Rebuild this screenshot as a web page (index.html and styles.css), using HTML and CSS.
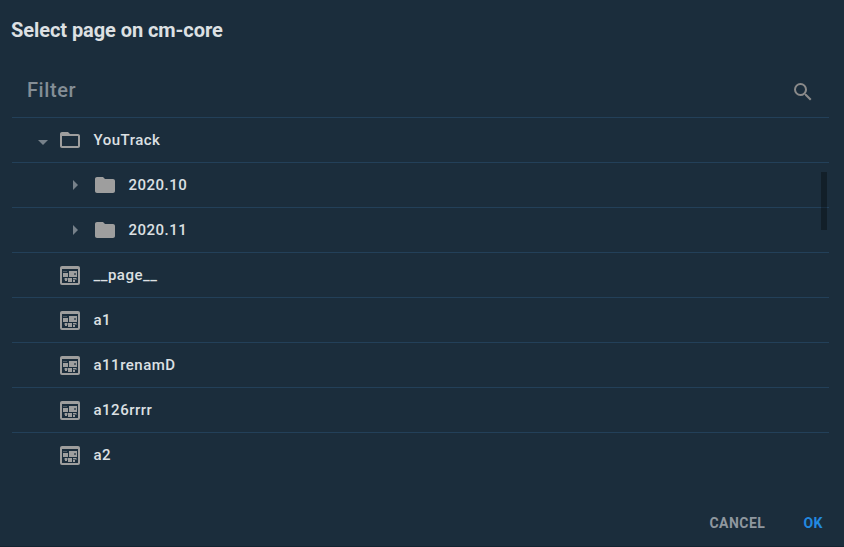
FILE: index.html
```
<!DOCTYPE html>
<html lang="en">
<head>
<meta charset="utf-8">
<title>Select page</title>
<link rel="stylesheet" href="styles.css">
</head>
<body>
<svg class="defs" aria-hidden="true">
  <symbol id="folder" viewBox="0 0 24 24"><path d="M10 4H4c-1.1 0-2 .9-2 2v12c0 1.1.9 2 2 2h16c1.1 0 2-.9 2-2V8c0-1.1-.9-2-2-2h-8l-2-2z"/></symbol>
  <symbol id="folder-open" viewBox="0 0 24 24"><path d="M20 18H4V8h16m0-2h-8l-2-2H4c-1.1 0-2 .9-2 2v12c0 1.1.9 2 2 2h16c1.1 0 2-.9 2-2V8c0-1.1-.9-2-2-2z"/></symbol>
  <symbol id="page" viewBox="0 0 24 24"><path fill-rule="evenodd" d="M4 3h16a2 2 0 0 1 2 2v15a2 2 0 0 1-2 2H4a2 2 0 0 1-2-2V5a2 2 0 0 1 2-2zM4 6v14h16V6z"/><path opacity=".4" d="M5 8h4v1H5zM16 9.500h2v3h-2zM15 15h4v2h-4zM6 15h1v2H6zM9 15h1v2H9z"/><path fill-rule="evenodd" d="M5 10h5v4H5zM11 8h8v6h-8zm5 2v2h2v-2zM7 15h2v3H7zM10 15h4v4h-4zM15 15h3v1h-3zM15 17h2v2h-2z"/></symbol>
</svg>
<main class="dialog">
  <h1 class="title">Select page on cm-core</h1>
  <div class="filter">
    <span>Filter</span>
    <svg class="icon" viewBox="0 0 24 24"><path d="M9.500 3A6.500 6.500 0 0 1 16 9.500c0 1.610-.590 3.090-1.560 4.230l.270.270h.790l5 5-1.500 1.500-5-5v-.790l-.270-.270A6.516 6.516 0 0 1 9.500 16a6.500 6.500 0 0 1 0-13m0 2C7 5 5 7 5 9.500S7 14 9.500 14 14 12 14 9.500 12 5 9.500 5z"/></svg>
  </div>
  <div class="tree">
    <div class="row"><i class="caret open"></i><svg class="icon"><use href="#folder-open"/></svg><span>YouTrack</span></div>
    <div class="row child"><i class="caret"></i><svg class="icon"><use href="#folder"/></svg><span>2020.10</span></div>
    <div class="row child"><i class="caret"></i><svg class="icon"><use href="#folder"/></svg><span>2020.11</span></div>
    <div class="row leaf"><svg class="icon"><use href="#page"/></svg><span>__page__</span></div>
    <div class="row leaf"><svg class="icon"><use href="#page"/></svg><span>a1</span></div>
    <div class="row leaf"><svg class="icon"><use href="#page"/></svg><span>a11renamD</span></div>
    <div class="row leaf"><svg class="icon"><use href="#page"/></svg><span>a126rrrr</span></div>
    <div class="row leaf"><svg class="icon"><use href="#page"/></svg><span>a2</span></div>
    <div class="scrollbar"></div>
  </div>
  <footer class="actions"><button>CANCEL</button><button class="primary">OK</button></footer>
</main>
</body>
</html>
```
FILE: styles.css
```
* { box-sizing: border-box; }
body {
  margin: 0;
  background: #1b2d3c;
  color: #dde0e3;
  font-family: Roboto, "Liberation Sans", sans-serif;
}
.defs { position: absolute; width: 0; height: 0; }
.dialog {
  display: flex;
  flex-direction: column;
  height: 547px;
  padding: 0 15px 0 12px;
  border-bottom: 1px solid #142330;
}
.title {
  height: 60px;
  margin: 0 0 0 -1px;
  font-size: 20px;
  line-height: 60px;
  font-weight: 700;
  letter-spacing: -0.07px;
}
.filter {
  display: flex;
  align-items: center;
  justify-content: space-between;
  height: 58px;
  padding: 1px 14px 0 15px;
  border-bottom: 1px solid #234059;
  color: #848e96;
  font-size: 20px;
  font-weight: 500;
  letter-spacing: 0.6px;
}
.filter span { margin-top: 1px; }
.icon { width: 24px; height: 24px; flex: none; fill: #9e9e9e; }
.filter .icon { margin-top: 6px; fill: #8a8a8a; }
.tree { position: relative; height: 359px; }
.row {
  display: flex;
  align-items: center;
  height: 45px;
  padding-left: 26px;
  border-bottom: 1px solid #234059;
  font-size: 15px;
  font-weight: 500;
  letter-spacing: 0.5px;
}
.row:nth-child(8) { border-color: transparent; }
.row span { margin-left: 11.5px; }
.child { padding-left: 61px; }
.leaf { padding-left: 46px; }
.caret {
  width: 5px;
  height: 10px;
  margin-right: 15px;
  background: #77818a;
  clip-path: polygon(0 0, 100% 50%, 0 100%);
}
.caret.open {
  width: 10px;
  height: 5px;
  margin: 5px 10px 0 0;
  clip-path: polygon(0 0, 100% 0, 50% 100%);
}
.scrollbar {
  position: absolute;
  top: 54px;
  right: 2px;
  width: 6px;
  height: 58px;
  background: rgba(0, 0, 0, 0.3);
}
.actions {
  display: flex;
  justify-content: flex-end;
  align-items: center;
  gap: 38px;
  height: 69px;
  padding: 22px 6px 0 0;
}
button {
  padding: 0;
  border: 0;
  background: none;
  color: #8f979f;
  font: 700 14px Roboto, sans-serif;
  letter-spacing: 0.5px;
}
.primary { color: #2289e0; }
```
